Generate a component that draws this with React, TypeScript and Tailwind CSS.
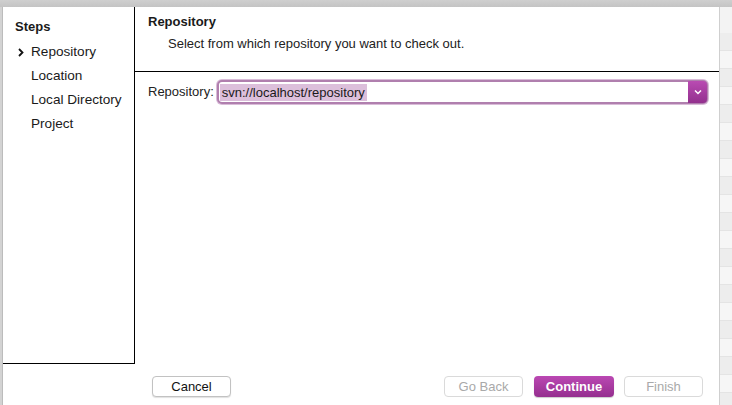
import React from "react";

function Stripes() {
  const rows = Array.from({ length: 24 });
  return (
    <div className="flex flex-col w-full">
      <div className="h-[26px] bg-[#f3f3f3]" />
      {rows.map((_, i) => (
        <div
          key={i}
          className={
            "h-[18px] border-b border-[#e4e4e4] " +
            (i % 2 === 0 ? "bg-[#ededed]" : "bg-[#f6f6f6]")
          }
        />
      ))}
    </div>
  );
}

export default function App() {
  const font = { fontFamily: '"Helvetica Neue", "Liberation Sans", Arial, sans-serif' };
  return (
    <div
      className="w-[732px] h-[405px] overflow-hidden bg-[#d6d6d6] flex flex-col text-[#1a1a1a]"
      style={font}
    >
      <div className="h-[7px] bg-gradient-to-b from-[#cfcfcf] to-[#c4c4c4] shrink-0" />
      <div className="flex flex-1 min-h-0">
        <div className="w-[3px] bg-[#d3d3d3] shrink-0 border-r border-[#bcbcbc]" />
        <div className="w-[716px] bg-white flex flex-col shrink-0">
          <div className="flex h-[357px] shrink-0">
            <div className="w-[132px] shrink-0 border-r border-b border-black pt-[12px]">
              <div className="pl-[12px] text-[13px] font-bold leading-[16px]">Steps</div>
              <div className="mt-[9px] flex flex-col gap-[8px]">
                <div className="flex items-center h-[16px] text-[13.6px] leading-[16px]">
                  <span className="w-[28px] pl-[15px]">
                    <svg width="6" height="9" viewBox="0 0 6 9" className="mt-[1px]">
                      <path d="M1 1 L4.5 4.5 L1 8" fill="none" stroke="#111" strokeWidth="1.8" />
                    </svg>
                  </span>
                  <span>Repository</span>
                </div>
                <div className="pl-[28px] h-[16px] text-[13.6px] leading-[16px]">Location</div>
                <div className="pl-[28px] h-[16px] text-[13.6px] leading-[16px]">Local Directory</div>
                <div className="pl-[28px] h-[16px] text-[13.6px] leading-[16px]">Project</div>
              </div>
            </div>
            <div className="flex-1 flex flex-col min-w-0">
              <div className="h-[65px] border-b border-black shrink-0 pt-[7px]">
                <div className="pl-[13px] text-[13px] font-bold leading-[16px]">Repository</div>
                <div className="pl-[33px] mt-[6px] text-[13px] leading-[15px] text-[#222]">
                  Select from which repository you want to check out.
                </div>
              </div>
              <div className="flex items-center pt-[8px] pl-[13px] pr-[11px]">
                <span className="text-[13px] text-[#222] mr-[3px]">Repository:</span>
                <div className="flex-1 h-[24px] rounded-[5px] border-[2px] border-[#b07fae] bg-white flex items-center relative shadow-[0_0_0_1px_#d9bcd8]">
                  <span className="ml-[1px] px-[2px] bg-[#dcbfdb] text-[13px] leading-[17px] text-[#1a1a1a]">
                    svn://localhost/repository
                  </span>
                  <div className="absolute right-[-1px] top-[-1px] bottom-[-1px] w-[19px] rounded-r-[4px] bg-gradient-to-b from-[#b94bb2] to-[#93308e] flex items-center justify-center">
                    <svg width="8" height="6" viewBox="0 0 8 6">
                      <path d="M1 1.5 L4 4.5 L7 1.5" fill="none" stroke="white" strokeWidth="1.5" />
                    </svg>
                  </div>
                </div>
              </div>
            </div>
          </div>
          <div className="flex items-start pt-[12px] text-[13px]">
            <button className="ml-[149px] w-[79px] h-[21px] rounded-[4px] bg-white border border-[#c2c2c2] shadow-[0_1px_1px_rgba(0,0,0,0.12)] text-[#111] leading-none">
              Cancel
            </button>
            <button className="ml-[213px] w-[79px] h-[21px] rounded-[4px] bg-white border border-[#dadada] text-[#a9a9a9] leading-none">
              Go Back
            </button>
            <button className="ml-[11px] w-[80px] h-[21px] rounded-[4px] bg-gradient-to-b from-[#bb48b3] to-[#952f8f] text-white font-semibold leading-none shadow-[0_1px_1px_rgba(0,0,0,0.2)]">
              Continue
            </button>
            <button className="ml-[10px] w-[79px] h-[21px] rounded-[4px] bg-white border border-[#dadada] text-[#a9a9a9] leading-none">
              Finish
            </button>
          </div>
        </div>
        <div className="flex-1 border-l border-[#cfcfcf] bg-[#f3f3f3]">
          <Stripes />
        </div>
      </div>
    </div>
  );
}
